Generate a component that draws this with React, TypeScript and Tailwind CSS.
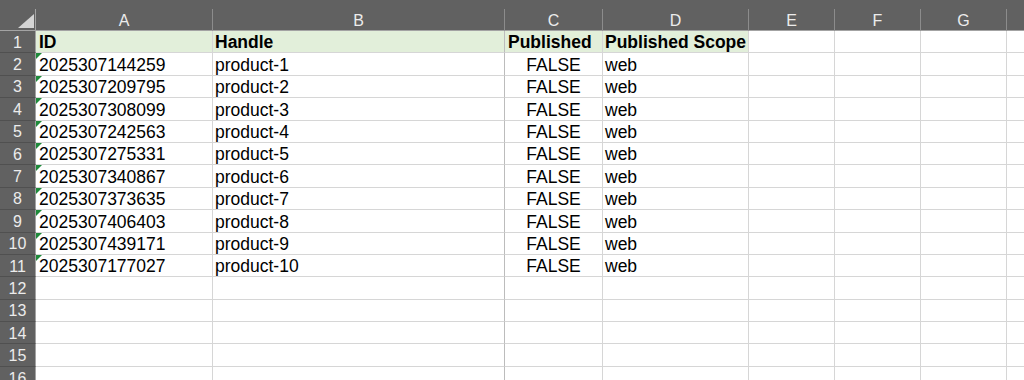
import React from "react"

const rows = [
  ["2025307144259", "product-1"],
  ["2025307209795", "product-2"],
  ["2025307308099", "product-3"],
  ["2025307242563", "product-4"],
  ["2025307275331", "product-5"],
  ["2025307340867", "product-6"],
  ["2025307373635", "product-7"],
  ["2025307406403", "product-8"],
  ["2025307439171", "product-9"],
  ["2025307177027", "product-10"],
]

const letters = [
  { l: "A", w: "w-[177px]" },
  { l: "B", w: "w-[292px]" },
  { l: "C", w: "w-[98px]" },
  { l: "D", w: "w-[146px]" },
  { l: "E", w: "w-[86px]" },
  { l: "F", w: "w-[86px]" },
  { l: "G", w: "w-[86px]" },
  { l: "", w: "w-[86px]" },
]

function RowHead({ n }: { n: number }) {
  return (
    <div className="w-[36px] shrink-0 h-full flex items-center justify-center pt-[2px] bg-[#616161] text-[#ececec] text-[16px] border-r border-r-[#a3a3a3] border-b border-b-[#505050]">
      {n}
    </div>
  )
}

function Row({ n, children, green }: { n: number; children?: React.ReactNode[]; green?: boolean }) {
  const c = children ?? []
  const bg = green ? "bg-[#e2efda]" : ""
  return (
    <div className="flex h-[22.4px] shrink-0">
      <RowHead n={n} />
      <div className={`relative w-[177px] shrink-0 border-r border-b border-[#d6d6d6] px-[3px] flex items-center pt-[3px] ${bg}`}>
        {c[0]}
      </div>
      <div className={`w-[292px] shrink-0 border-r border-b border-r-[#bcbcbc] border-b-[#d6d6d6] px-[2px] flex items-center pt-[3px] ${bg}`}>
        {c[1]}
      </div>
      <div className={`w-[98px] shrink-0 border-r border-b border-[#d6d6d6] px-[3px] flex items-center pt-[3px] ${bg}`}>
        {c[2]}
      </div>
      <div className={`w-[146px] shrink-0 border-r border-b border-[#d6d6d6] px-[2px] flex items-center pt-[3px] ${bg}`}>
        {c[3]}
      </div>
      <div className="w-[86px] shrink-0 border-r border-b border-[#d6d6d6]" />
      <div className="w-[86px] shrink-0 border-r border-b border-[#d6d6d6]" />
      <div className="w-[86px] shrink-0 border-r border-b border-[#d6d6d6]" />
      <div className="w-[86px] shrink-0 border-r border-b border-[#d6d6d6]" />
    </div>
  )
}

function Flag() {
  return (
    <span className="absolute left-0 top-0 w-0 h-0 border-t-[6px] border-r-[6px] border-t-[#1e8a3a] border-r-transparent" />
  )
}

export default function App() {
  return (
    <div className="w-[1024px] h-[380px] overflow-hidden bg-white flex flex-col text-black text-[17.5px] leading-none font-['Liberation_Sans',Arial,sans-serif]">
      <div className="h-[9px] shrink-0 bg-[#616161]" />
      <div className="flex h-[22px] shrink-0 bg-[#616161]">
        <div className="w-[36px] shrink-0 h-full border-r border-b border-[#a3a3a3] flex items-center justify-center">
          <svg width="16" height="14" viewBox="0 0 16 14" className="ml-[16px] mt-[2px]">
            <polygon points="16,0 16,14 0,14" fill="#d4d4d4" />
          </svg>
        </div>
        {letters.map((c, i) => (
          <div
            key={i}
            className={`${c.w} shrink-0 h-full border-r border-r-[#8c8c8c] border-b border-b-[#a3a3a3] flex items-center justify-center pt-[2px] text-[16px] text-[#ececec]`}
          >
            {c.l}
          </div>
        ))}
      </div>
      <Row n={1} green>
        {[
          <b key="a">ID</b>,
          <b key="b">Handle</b>,
          <b key="c">Published</b>,
          <b key="d">Published Scope</b>,
        ]}
      </Row>
      {rows.map((r, i) => (
        <Row key={r[0]} n={i + 2}>
          {[
            <React.Fragment key="a">
              <Flag />
              {r[0]}
            </React.Fragment>,
            <span key="b">{r[1]}</span>,
            <span key="c" className="w-full text-center">FALSE</span>,
            <span key="d">web</span>,
          ]}
        </Row>
      ))}
      {[12, 13, 14, 15, 16].map((n) => (
        <Row key={n} n={n} />
      ))}
    </div>
  )
}
